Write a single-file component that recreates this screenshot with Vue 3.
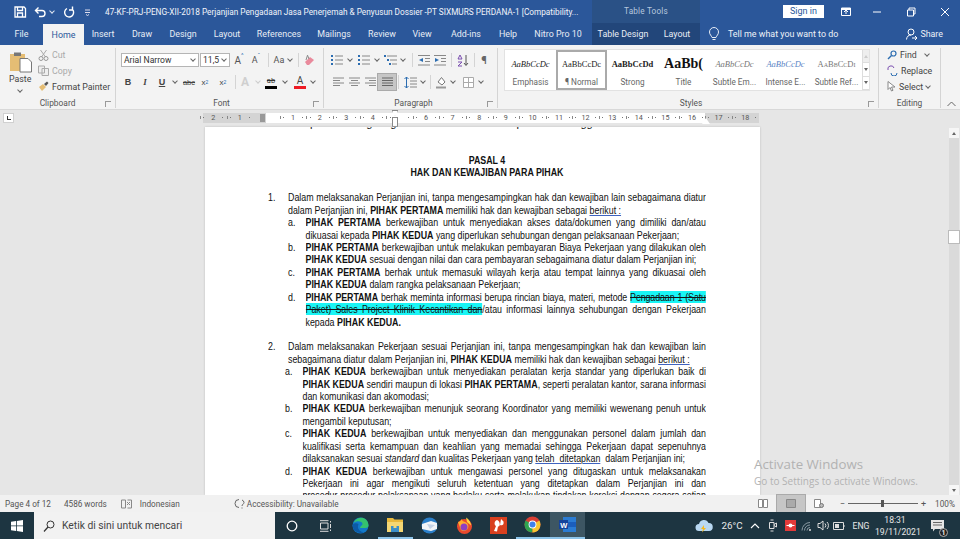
<template>
  <div class="word">
    <!-- title bar -->
    <header class="titlebar">
      <div class="qat">
        <svg class="q1" width="14" height="14" viewBox="0 0 14 14"><path d="M2 2h9l1.500 1.500V12H2zM4.500 2v3.500h5V2M4.500 12V8h5v4" fill="none" stroke="#fff" stroke-width="1.300"/></svg>
        <svg class="q2" width="14" height="14" viewBox="0 0 14 14"><path d="M3 5.500h6a3 3 0 0 1 0 6H6M5.500 2.500l-3 3 3 3" fill="none" stroke="#fff" stroke-width="1.400"/></svg>
        <span class="caret white q3"></span>
        <svg class="q4" width="14" height="14" viewBox="0 0 14 14"><path d="M5 3.500a4.500 4.500 0 1 0 5.500 1M10.500 1.500v3.500H7" fill="none" stroke="#fff" stroke-width="1.400"/></svg>
        <svg class="q5" width="8" height="8" viewBox="0 0 8 8"><path d="M1 2h5M1 4.500h5M2 6.500l1.500 1 1.500-1" fill="none" stroke="#dde" stroke-width="1"/></svg>
      </div>
      <div class="doc-title">47-KF-PRJ-PENG-XII-2018 Perjanjian Pengadaan Jasa Penerjemah &amp; Penyusun Dossier -PT SIXMURS PERDANA-1 [Compatibility...</div>
      <div class="context-title">Table Tools</div>
      <button class="signin">Sign in</button>
      <div class="win-btns">
        <svg width="11" height="10" viewBox="0 0 11 10"><path d="M.5 1h9v7.500h-9z" fill="none" stroke="#fff"/><path d="M5 7V3.500M3 5l2-2 2 2" fill="none" stroke="#fff"/><path d="M.5 1h9v2h-9z" fill="#fff"/></svg>
        <svg width="10" height="10" viewBox="0 0 10 10"><path d="M1 5h8" stroke="#fff"/></svg>
        <svg width="10" height="10" viewBox="0 0 10 10"><path d="M1.500 3h6v6h-6zM3 3V1h6v6H7.500" fill="none" stroke="#fff"/></svg>
        <svg width="10" height="10" viewBox="0 0 10 10"><path d="M1 1l8 8M9 1l-8 8" stroke="#fff"/></svg>
      </div>
    </header>

    <!-- tabs -->
    <nav class="tabs">
      <div
        v-for="t in tabs"
        :key="t.label + t.w"
        class="tab"
        :class="{ active: t.label === 'Home', ctx: t.ctx }"
        :style="{ width: t.w + 'px' }"
      >{{ t.label }}</div>
      <svg class="bulb" width="12" height="15" viewBox="0 0 12 15"><path d="M4 10.500C3.500 8.500 1.500 7.800 1.500 5a4.500 4.500 0 0 1 9 0c0 2.800-2 3.500-2.500 5.500zM4.500 12.500h3" fill="none" stroke="#e6ecf5" stroke-width="1"/></svg>
      <span class="tell">Tell me what you want to do</span>
      <svg class="share-ico" width="11" height="12" viewBox="0 0 11 12"><circle cx="5" cy="4" r="3" fill="none" stroke="#fff"/><path d="M.5 11.500c.3-3 2-4.500 4.500-4.500M6 10h5M9 8l2 2-2 2" fill="none" stroke="#fff"/></svg>
      <span class="share">Share</span>
    </nav>

    <!-- ribbon -->
    <section class="ribbon">
      <div class="group clipboard">
        <div class="g-body clip-body">
          <div class="paste">
            <svg width="24" height="22" viewBox="0 0 24 22">
              <path d="M1 3h15v17H1z" fill="#e5bd74"/>
              <path d="M5 1.500h7V5H5z" fill="#777"/>
              <path d="M11 7.500h8l3.500 3.500v10H11z" fill="#fff" stroke="#777"/>
            </svg>
            <span>Paste</span>
            <span class="caret"></span>
          </div>
          <div class="clip-list">
            <div class="clip-row dim">
              <svg width="11" height="12" viewBox="0 0 11 12"><path d="M2.500 1l5 7M8.500 1l-5 7" stroke="#aaa" fill="none"/><circle cx="3" cy="9.500" r="2" fill="none" stroke="#999"/><circle cx="8" cy="9.500" r="2" fill="none" stroke="#999"/></svg>
              Cut
            </div>
            <div class="clip-row dim">
              <svg width="11" height="11" viewBox="0 0 11 11"><path d="M.5 1h6v7h-6zM4 3.500h6.500v7H4z" fill="#eee" stroke="#aaa"/></svg>
              Copy
            </div>
            <div class="clip-row">
              <svg width="11" height="11" viewBox="0 0 11 11"><path d="M1 6l4-3 3 3-4 4z" fill="#e5bd74"/><path d="M6 3l3-2.500 1.500 1.500L8 5" fill="#555"/></svg>
              Format Painter
            </div>
          </div>
        </div>
        <div class="g-label">Clipboard<i class="launcher"></i></div>
      </div>

      <div class="group font">
        <div class="g-body">
          <div class="row">
            <div class="select fname">Arial Narrow<span class="caret"></span></div>
            <div class="select fsize">11,5<span class="caret"></span></div>
            <span class="tb w18 big">A<sup class="up">^</sup></span>
            <span class="tb w16 mid">A<sup class="up">ˇ</sup></span>
            <span class="tb w8"><i class="sep"></i></span>
            <span class="tb w14 mid">Aa</span>
            <span class="tb w8"><span class="caret"></span></span>
            <span class="tb w8"><i class="sep"></i></span>
            <span class="tb w16">
              <svg width="12" height="12" viewBox="0 0 12 12"><path d="M1 8l5-5 4 3-5 5H3z" fill="#e98a9c"/><path d="M3.500 1.200L2 6M3.500 1.200L5 5" stroke="#8a8a8a" fill="none"/></svg>
            </span>
          </div>
          <div class="row">
            <span class="tb w16 fmt bold">B</span>
            <span class="tb w18 fmt ital">I</span>
            <span class="tb w16 fmt under">U</span>
            <span class="tb w10"><span class="caret"></span></span>
            <span class="tb w18 fmt strike">abc</span>
            <span class="tb w14 fmt">x<sub>2</sub></span>
            <span class="tb w22 fmt">x<sup>2</sup></span>
            <span class="tb w2"><i class="sep"></i></span>
            <span class="tb w18 ghost">A</span>
            <span class="tb w8"><span class="caret pale"></span></span>
            <span class="tb w18 swatch">
              <span class="ab">ab</span><i class="bar black"></i>
            </span>
            <span class="tb w10"><span class="caret"></span></span>
            <span class="tb w20 swatch">
              <span class="aa">A</span><i class="bar red"></i>
            </span>
            <span class="tb w6"><span class="caret"></span></span>
          </div>
        </div>
        <div class="g-label">Font<i class="launcher"></i></div>
      </div>

      <div class="group para">
        <div class="g-body">
          <div class="row">
            <span class="tb w14"><svg width="12" height="12" viewBox="0 0 12 12"><path d="M4 2h8M4 6h8M4 10h8" stroke="#888"/><path d="M0 1h2v2H0zM0 5h2v2H0zM0 9h2v2H0z" fill="#2b6cb0"/></svg></span>
            <span class="tb w12"><span class="caret"></span></span>
            <span class="tb w16"><svg width="12" height="12" viewBox="0 0 12 12"><path d="M4 2h8M4 6h8M4 10h8" stroke="#888"/><path d="M0 1h2v2H0zM0 5h2v2H0zM0 9h2v2H0z" fill="#2b6cb0"/></svg></span>
            <span class="tb w10"><span class="caret"></span></span>
            <span class="tb w16"><svg width="13" height="12" viewBox="0 0 13 12"><path d="M3 2h10M6 6h7M8 10h5" stroke="#888"/><path d="M0 1h2v2H0zM3 5h2v2H3zM5 9h2v2H5z" fill="#2b6cb0"/></svg></span>
            <span class="tb w10"><span class="caret"></span></span>
            <span class="tb w8"><i class="sep"></i></span>
            <span class="tb w16"><svg width="12" height="11" viewBox="0 0 12 11"><path d="M0 .5h12M7 3.500h5M7 6.500h5M0 10h12" stroke="#888"/><path d="M5 3L1 5l4 2z" fill="#2b6cb0"/></svg></span>
            <span class="tb w16"><svg width="12" height="11" viewBox="0 0 12 11"><path d="M0 .5h12M7 3.500h5M7 6.500h5M0 10h12" stroke="#888"/><path d="M1 3l4 2-4 2z" fill="#2b6cb0"/></svg></span>
            <span class="tb w6"><i class="sep"></i></span>
            <span class="tb w18">
              <svg width="12" height="13" viewBox="0 0 12 13"><path d="M3 1L1 5h4zM1 8h4L1 12h4" fill="none" stroke="#7b4fb0"/><path d="M9 1v10M7 9l2 2.500L11 9" fill="none" stroke="#555"/></svg>
            </span>
            <span class="tb w4"><i class="sep"></i></span>
            <span class="tb w16 pil">¶</span>
          </div>
          <div class="row">
            <span class="tb w16"><svg width="11" height="10" viewBox="0 0 11 10"><path d="M0 1h11M0 3.500h7M0 6h11M0 8.500h7" stroke="#888"/></svg></span>
            <span class="tb w16"><svg width="11" height="10" viewBox="0 0 11 10"><path d="M0 1h11M2 3.500h7M0 6h11M2 8.500h7" stroke="#888"/></svg></span>
            <span class="tb w16"><svg width="11" height="10" viewBox="0 0 11 10"><path d="M0 1h11M4 3.500h7M0 6h11M4 8.500h7" stroke="#888"/></svg></span>
            <span class="tb w18 on"><svg width="11" height="10" viewBox="0 0 11 10"><path d="M0 1h11M0 3.500h11M0 6h11M0 8.500h11" stroke="#666"/></svg></span>
            <span class="tb w4"><i class="sep"></i></span>
            <span class="tb w20">
              <svg width="13" height="13" viewBox="0 0 13 13"><path d="M2.500 1v11M.5 3l2-2 2 2M.5 10l2 2 2-2" fill="none" stroke="#2b6cb0"/><path d="M6 2h7M6 5h7M6 8h7M6 11h7" stroke="#888"/></svg>
            </span>
            <span class="tb w6"><span class="caret"></span></span>
            <span class="tb w8"><i class="sep"></i></span>
            <span class="tb w14">
              <svg width="13" height="13" viewBox="0 0 13 13"><path d="M3 6l3.500-4.500L10 6l-3 3z" fill="#fff" stroke="#777"/><path d="M1 11.500h10" stroke="#999" stroke-width="2"/></svg>
            </span>
            <span class="tb w10"><span class="caret"></span></span>
            <span class="tb w20">
              <svg width="11" height="11" viewBox="0 0 11 11"><path d="M.5.500h10v10H.5zM5.500.500v10M.5 5.500h10" fill="#fff" stroke="#aaa"/></svg>
            </span>
            <span class="tb w6"><span class="caret"></span></span>
          </div>
        </div>
        <div class="g-label">Paragraph<i class="launcher"></i></div>
      </div>

      <div class="group styles">
        <div class="g-body gallery-wrap">
          <div class="gallery">
            <div v-for="s in styles" :key="s.label" class="style" :class="s.cls">
              <div class="sample">{{ s.sample }}</div>
              <div class="s-name">{{ s.label }}</div>
            </div>
            <div class="g-scroll">
              <span class="g-btn"><i class="tri-up"></i></span>
              <span class="g-btn"><i class="tri"></i></span>
              <span class="g-btn"><i class="tri"></i></span>
            </div>
          </div>
        </div>
        <div class="g-label">Styles<i class="launcher"></i></div>
      </div>

      <div class="group editing">
        <div class="g-body edit-list">
          <div class="edit-row">
            <svg width="10" height="10" viewBox="0 0 10 10"><circle cx="6.500" cy="3.500" r="2.500" fill="none" stroke="#2b6cb0" stroke-width="1.200"/><path d="M4.500 5.500L1 9" stroke="#2b6cb0" stroke-width="1.500"/></svg>
            Find <span class="caret edit-caret"></span>
          </div>
          <div class="edit-row">
            <svg width="11" height="11" viewBox="0 0 11 11"><path d="M1 5a3 3 0 0 1 6-2" fill="none" stroke="#7b4fb0"/><path d="M4 8a3 3 0 0 0 6 0" fill="none" stroke="#2b6cb0"/></svg>
            Replace
          </div>
          <div class="edit-row">
            <svg width="9" height="11" viewBox="0 0 9 11"><path d="M1 .5v8l2-2 1.500 3.500 1.500-.7L4.500 6H8z" fill="#fff" stroke="#888"/></svg>
            Select <span class="caret"></span>
          </div>
        </div>
        <div class="g-label">Editing</div>
      </div>
      <svg class="collapse" width="9" height="6" viewBox="0 0 9 6"><path d="M.5 5L4.500 1l4 4" fill="none" stroke="#666"/></svg>
    </section>

    <!-- ruler -->
    <div class="ruler-bar">
      <span class="tab-stop"></span>
      <div class="ruler">
        <div v-for="k in rulerMarks" :key="k" class="r-cell" :class="{ zero: k === 0 }">
          <i></i><span>{{ k === 0 || k === 5 ? '' : Math.abs(k) }}</span><i></i>
        </div>
        <span class="indent-top"></span>
        <span class="indent-bot"></span>
        <span class="right-ind"></span>
      </div>
    </div>

    <!-- document -->
    <main class="workspace">
      <div class="canvas">
        <article class="page">
          <div class="ln clipped">
            <span v-for="(m, i) in clipMarks" :key="i" :style="{ marginLeft: m.x + 'px' }">{{ m.c }}</span>
          </div>

          <!-- no Arial Narrow here, so Liberation Sans is squeezed to its width -->
          <div class="narrow">
            <h1 class="heading">PASAL 4</h1>
            <h1 class="heading after">HAK DAN KEWAJIBAN PARA PIHAK</h1>

            <div class="item">
              <div>1.</div>
              <div>
                <div class="ln j">Dalam melaksanakan Perjanjian ini, tanpa mengesampingkan hak dan kewajiban lain sebagaimana diatur</div>
                <div class="ln">dalam Perjanjian ini, <b>PIHAK PERTAMA</b> memiliki hak dan kewajiban sebagai <span class="proof">berikut :</span></div>
              </div>
            </div>
            <div class="sub first">
              <div>a.</div>
              <div>
                <div class="ln j"><b>PIHAK PERTAMA</b> berkewajiban untuk menyediakan akses data/dokumen yang dimiliki dan/atau</div>
                <div class="ln">dikuasai kepada <b>PIHAK KEDUA</b> yang diperlukan sehubungan dengan pelaksanaan Pekerjaan;</div>
              </div>
              <div>b.</div>
              <div>
                <div class="ln j"><b>PIHAK PERTAMA</b> berkewajiban untuk melakukan pembayaran Biaya Pekerjaan yang dilakukan oleh</div>
                <div class="ln"><b>PIHAK KEDUA</b> sesuai dengan nilai dan cara pembayaran sebagaimana diatur dalam Perjanjian ini;</div>
              </div>
              <div>c.</div>
              <div>
                <div class="ln j"><b>PIHAK PERTAMA</b> berhak untuk memasuki wilayah kerja atau tempat lainnya yang dikuasai oleh</div>
                <div class="ln"><b>PIHAK KEDUA</b> dalam rangka pelaksanaan Pekerjaan;</div>
              </div>
              <div>d.</div>
              <div>
                <div class="ln j tight"><b>PIHAK PERTAMA</b> berhak meminta informasi berupa rincian biaya, materi, metode <span class="struck">Pengadaan 1 (Satu</span></div>
                <div class="ln j"><span class="struck">Paket) Sales Project Klinik Kecantikan dan</span>/atau informasi lainnya sehubungan dengan Pekerjaan</div>
                <div class="ln">kepada <b>PIHAK KEDUA.</b></div>
              </div>
            </div>

            <div class="item second">
              <div>2.</div>
              <div>
                <div class="ln j">Dalam melaksanakan Pekerjaan sesuai Perjanjian ini, tanpa mengesampingkan hak dan kewajiban lain</div>
                <div class="ln">sebagaimana diatur dalam Perjanjian ini, <b>PIHAK KEDUA</b> memiliki hak dan kewajiban sebagai <span class="proof">berikut :</span></div>
              </div>
            </div>
            <div class="sub second-sub">
              <div>a.</div>
              <div>
                <div class="ln j"><b>PIHAK KEDUA</b> berkewajiban untuk menyediakan peralatan kerja standar yang diperlukan baik di lokasi</div>
                <div class="ln j"><b>PIHAK KEDUA</b> sendiri maupun di lokasi <b>PIHAK PERTAMA</b>, seperti peralatan kantor, sarana informasi</div>
                <div class="ln">dan komunikasi dan akomodasi;</div>
              </div>
              <div>b.</div>
              <div>
                <div class="ln j"><b>PIHAK KEDUA</b> berkewajiban menunjuk seorang Koordinator yang memiliki wewenang penuh untuk</div>
                <div class="ln">mengambil keputusan;</div>
              </div>
              <div>c.</div>
              <div>
                <div class="ln j"><b>PIHAK KEDUA</b> berkewajiban untuk menyediakan dan menggunakan personel dalam jumlah dan</div>
                <div class="ln j">kualifikasi serta kemampuan dan keahlian yang memadai sehingga Pekerjaan dapat sepenuhnya</div>
                <div class="ln">dilaksanakan sesuai <i>standard</i> dan kualitas Pekerjaan yang <span class="proof">telah&nbsp; ditetapkan</span>&nbsp; dalam Perjanjian ini;</div>
              </div>
              <div>d.</div>
              <div>
                <div class="ln j"><b>PIHAK KEDUA</b> berkewajiban untuk mengawasi personel yang ditugaskan untuk melaksanakan</div>
                <div class="ln j">Pekerjaan ini agar mengikuti seluruh ketentuan yang ditetapkan dalam Perjanjian ini dan</div>
                <div class="ln j">prosedur-prosedur pelaksanaan yang berlaku serta melakukan tindakan koreksi dengan segera setiap</div>
              </div>
            </div>
          </div>
        </article>
      </div>
      <aside class="vscroll">
        <span class="v-btn"><i class="tri-up"></i></span>
        <span class="v-thumb"></span>
        <span class="v-btn end"><i class="tri"></i></span>
      </aside>
      <div class="activate">
        <div class="a1">Activate Windows</div>
        <div class="a2">Go to Settings to activate Windows.</div>
      </div>
    </main>

    <!-- status bar -->
    <footer class="status">
      <span class="st-page">Page 4 of 12</span>
      <span class="st-words">4586 words</span>
      <svg class="st-book" width="11" height="10" viewBox="0 0 11 10"><path d="M.5 1h4v8h-4zM6.500 1h4M6.500 9h4M10.500 1v8" fill="none" stroke="#888"/><path d="M6 3l3 3M9 3L6 6" stroke="#888"/></svg>
      <span class="st-lang">Indonesian</span>
      <svg class="st-acc" width="12" height="11" viewBox="0 0 12 11"><path d="M5 1.500a4 4 0 1 0 0 8M8 2a3 3 0 0 1 2 2.500c0 1.500-2 1.800-2 3.500M8 9.500v1" fill="none" stroke="#666"/></svg>
      <span class="st-acc-text">Accessibility: Unavailable</span>
      <div class="views">
        <span class="view"><svg width="10" height="9" viewBox="0 0 10 9"><path d="M.5.500h4v8h-4zM5.500.500h4v8h-4z" fill="#fff" stroke="#888"/></svg></span>
        <span class="view on"><svg width="10" height="9" viewBox="0 0 10 9"><path d="M.5.500h9v8h-9z" fill="#aaa" stroke="#888"/></svg></span>
        <span class="view"><svg width="10" height="9" viewBox="0 0 10 9"><path d="M.5.500h6v8h-6z" fill="#fff" stroke="#888"/><circle cx="7.500" cy="6.500" r="2" fill="#bbb" stroke="#777"/></svg></span>
      </div>
      <div class="zoom">
        <span>−</span>
        <div class="track"><i></i></div>
        <span>+</span>
      </div>
      <span class="zoom-pct">100%</span>
    </footer>

    <!-- taskbar -->
    <div class="taskbar">
      <div class="start">
        <svg width="12" height="12" viewBox="0 0 12 12"><path d="M0 1.700L5 1v4.500H0zM5.800.9L12 0v5.500H5.800zM0 6.300h5v4.600l-5-.7zM5.800 6.300H12V12l-6.200-.9z" fill="#fff"/></svg>
      </div>
      <div class="search">
        <svg width="12" height="12" viewBox="0 0 12 12"><circle cx="7.500" cy="4.500" r="3.500" fill="none" stroke="#333"/><path d="M5 7l-4 4.500" stroke="#333" stroke-width="1.200"/></svg>
        <span>Ketik di sini untuk mencari</span>
      </div>
      <div class="apps">
        <div class="app"><svg width="12" height="12" viewBox="0 0 12 12"><circle cx="6" cy="6" r="4.800" fill="none" stroke="#fff" stroke-width="1.300"/></svg></div>
        <div class="app"><svg width="13" height="12" viewBox="0 0 13 12"><path d="M.5 3h7.500v6H.5zM0 .7h8.500M0 11.300h8.500M10.500 1v1.500M10.500 4v4M10.500 9.500V11" fill="none" stroke="#ddd"/></svg></div>
        <div class="app">
          <svg width="17" height="17" viewBox="0 0 17 17"><circle cx="8.500" cy="8.500" r="8" fill="#1279c9"/><path d="M1.500 6C3 2 7 .3 10.500.8c3.500.7 6 4 6 7.700 0 1.500-1 2.500-3 2.500H8c0-2 2.500-2.500 2.500-4C10.500 4.500 5 3 1.500 6z" fill="#35c26e"/><path d="M6 9c-.5 3 2 6 6 6.200A8 8 0 0 1 .5 8C1.500 6 5 5.500 6.500 7z" fill="#0c5aa6"/></svg>
        </div>
        <div class="app running">
          <svg width="16" height="15" viewBox="0 0 16 15"><path d="M0 1h6l1.500 1.500H16V15H0z" fill="#e8b93d"/><path d="M0 5h16v10H0z" fill="#f4d774"/><path d="M4 9h8v6H4z" fill="#3b8fc9"/><path d="M6.500 9h3v2h-3z" fill="#f4d774"/></svg>
        </div>
        <div class="app">
          <svg width="17" height="17" viewBox="0 0 17 17"><circle cx="8.500" cy="8.500" r="8" fill="#2b7fc9"/><path d="M1 7l9-3 6 2v6l-6 2-9-2z" fill="#f2f4f7"/><path d="M6 7l8 1-5 4z" fill="#c5d3e6"/></svg>
        </div>
        <div class="app">
          <svg width="17" height="17" viewBox="0 0 17 17"><circle cx="8.500" cy="9.500" r="7.500" fill="#e8492d"/><path d="M2 5c2 0 3-2 4-3 0 2 1 2 3 3 3 1 4 4 3 6-1 3-5 4-7 2" fill="#ffae2c"/><circle cx="8" cy="10" r="3.500" fill="#8e3fc2"/><path d="M10 .5c3 1.500 5 5 5 8L11 5z" fill="#ffd23f"/></svg>
        </div>
        <div class="app">
          <svg width="17" height="17" viewBox="0 0 17 17"><path d="M0 0h17v17H0z" fill="#d9401f"/><path d="M7 3C4 4 4 8 6 9l-2 5 3 .5 1-5c3 .5 2-6-1-6.500zM11 2l-1 6c3 1 4-1 3.500-3.500z" fill="#fff"/></svg>
        </div>
        <div class="app running">
          <svg width="17" height="17" viewBox="0 0 17 17"><circle cx="8.500" cy="8.500" r="8" fill="#d93f34"/><path d="M8.500 8.500L1.600 4.500A8 8 0 0 0 8.500 16.500z" fill="#2fa350"/><path d="M8.500 8.500l6.900-4A8 8 0 0 1 8.500 16.500z" fill="#f7c531"/><circle cx="8.500" cy="8.500" r="3.900" fill="#fff"/><circle cx="8.500" cy="8.500" r="3" fill="#3f81ec"/></svg>
        </div>
        <div class="app running active">
          <svg width="17" height="15" viewBox="0 0 17 15"><path d="M4 0h13v15H4z" fill="#2b7cd3"/><path d="M4 5h13v5H4z" fill="#1b5ebc"/><path d="M0 3h9v9H0z" fill="#14439b"/></svg>
          <b class="w-letter">W</b>
        </div>
      </div>
      <div class="tray">
        <span class="t28">
          <svg width="18" height="14" viewBox="0 0 18 14"><path d="M4 12a3.500 3.500 0 0 1 0-7 5 5 0 0 1 9.500-1A4 4 0 0 1 14 12z" fill="#b8d8f2"/><path d="M9 6l-3 4h2l-1 3.500L11 9H9z" fill="#f5b921"/></svg>
        </span>
        <span class="t28 temp">26°C</span>
        <span class="t18"><svg width="10" height="6" viewBox="0 0 10 6"><path d="M1 5l4-4 4 4" fill="none" stroke="#fff" stroke-width="1.100"/></svg></span>
        <span class="t18"><svg width="10" height="13" viewBox="0 0 10 13"><path d="M1.500 3.500h4.500v6H1.500zM6 5.500l2.500-1.500v4L6 6.500M2.500 1h3M2.500 12h3" fill="none" stroke="#ddd"/></svg></span>
        <span class="t16"><svg width="11" height="11" viewBox="0 0 11 11"><path d="M0 0h11v11H0z" fill="#e23a3a"/><circle cx="5.500" cy="5.500" r="2" fill="#fff"/><path d="M1.500 5.500h8" stroke="#fff"/></svg></span>
        <span class="t17"><svg width="11" height="10" viewBox="0 0 11 10"><path d="M1 9.500a8 8 0 0 1 8-8M3.500 9.500a5.500 5.500 0 0 1 5.500-5.500M6 9.500A3 3 0 0 1 9 6.500" fill="none" stroke="#8b9aa3"/><circle cx="9" cy="9" r="1" fill="#ddd"/></svg></span>
        <span class="t16"><svg width="13" height="11" viewBox="0 0 13 11"><path d="M1 3.500h2l3-2.500v9L3 7.500H1zM8 3.500a3 3 0 0 1 0 4M10 2a5 5 0 0 1 0 7" fill="none" stroke="#ddd"/></svg></span>
        <span class="t16"><svg width="12" height="8" viewBox="0 0 12 8"><path d="M.5.500h10v7H.5z" fill="none" stroke="#ddd"/><path d="M2 2h4v4H2z" fill="#ddd"/><path d="M11 3v2" stroke="#ddd"/></svg></span>
        <span class="t28 eng">ENG</span>
        <div class="clock"><div>18:31</div><div>19/11/2021</div></div>
        <span class="notif">
          <svg width="13" height="12" viewBox="0 0 13 12"><path d="M0 0h13v9H4L2 11.500V9H0z" fill="#e6e6e6"/><path d="M2 2.500h9M2 5h9" stroke="#666"/></svg>
          <b>1</b>
        </span>
      </div>
    </div>
  </div>
</template>

<script setup>
const tabs = [
  { label: 'File', w: 43 },
  { label: 'Home', w: 41 },
  { label: 'Insert', w: 38 },
  { label: 'Draw', w: 40 },
  { label: 'Design', w: 42 },
  { label: 'Layout', w: 46 },
  { label: 'References', w: 58 },
  { label: 'Mailings', w: 52 },
  { label: 'Review', w: 44 },
  { label: 'View', w: 36 },
  { label: 'Add-ins', w: 52 },
  { label: 'Help', w: 32 },
  { label: 'Nitro Pro 10', w: 68 },
  { label: 'Table Design', w: 62, ctx: true },
  { label: 'Layout', w: 46, ctx: true }
]

const styles = [
  { label: 'Emphasis', sample: 'AaBbCcDc', cls: 'em' },
  { label: '¶ Normal', sample: 'AaBbCcDc', cls: 'normal' },
  { label: 'Strong', sample: 'AaBbCcDd', cls: 'strong' },
  { label: 'Title', sample: 'AaBb(', cls: 'title' },
  { label: 'Subtle Em...', sample: 'AaBbCcDc', cls: 'subtle' },
  { label: 'Intense E...', sample: 'AaBbCcDc', cls: 'intense' },
  { label: 'Subtle Ref...', sample: 'AaBbCcDi', cls: 'ref' }
]

const rulerMarks = Array.from({ length: 21 }, (_, i) => i - 2)

// only the descenders of this line show under the ruler
const clipMarks = [
  { c: 'p', x: 105 },
  { c: 'g', x: 50 },
  { c: 'g', x: 18 },
  { c: 'p', x: 120 },
  { c: 'gg', x: 58 }
]
</script>

<style>
html, body {
  margin: 0;
  overflow: hidden;
}
</style>

<style scoped>
.word {
  width: 960px;
  height: 539px;
  display: flex;
  flex-direction: column;
  overflow: hidden;
  font-family: Roboto, "Open Sans", sans-serif;
  font-size: 8.8px;
  color: #444;
  background: #e6e6e6;
}

/* title bar */
.titlebar {
  height: 23px;
  flex: none;
  display: flex;
  align-items: center;
  background: #2b579a;
  color: #fff;
}
.qat {
  width: 105px;
  flex: none;
  display: flex;
  align-items: center;
}
.q1 { margin-left: 13px; }
.q2 { margin-left: 6px; }
.q3 { margin-left: 3px; }
.q4 { margin-left: 8px; }
.q5 { margin-left: 8px; }
.doc-title {
  width: 487px;
  flex: none;
  white-space: nowrap;
  color: #f2f5fa;
  font-size: 8.260px;
}
.context-title {
  width: 108px;
  flex: none;
  height: 23px;
  line-height: 23px;
  text-align: center;
  background: #2a5186;
  color: #b6c7de;
  font-size: 8.2px;
  letter-spacing: .2px;
}
.signin {
  margin-left: 83px;
  width: 41px;
  height: 13px;
  padding: 0;
  border: 0;
  background: #fff;
  color: #2b579a;
  font-family: inherit;
  font-size: 9px;
  line-height: 13px;
}
.win-btns {
  margin-left: 17px;
  display: flex;
  align-items: center;
  gap: 24px;
}
.win-btns svg:first-child {
  margin-right: -4px;
}

/* tabs */
.tabs {
  height: 22px;
  flex: none;
  display: flex;
  align-items: center;
  background: #2b579a;
  color: #e8edf5;
}
.tab {
  flex: none;
  height: 22px;
  line-height: 23px;
  text-align: center;
  font-size: 8.9px;
}
.tab.active {
  height: 21px;
  margin-top: 1px;
  line-height: 22px;
  background: #f3f3f3;
  color: #2b579a;
}
.tab.ctx {
  background: #22467a;
}
.bulb {
  margin-left: 8px;
  flex: none;
}
.tell {
  margin-left: 8px;
  font-size: 8.9px;
  color: #eef2f8;
  white-space: nowrap;
}
.share-ico {
  margin-left: auto;
}
.share {
  margin-left: 3px;
  margin-right: 17px;
  color: #eef2f8;
  font-size: 8.9px;
}

/* ribbon */
.ribbon {
  height: 65px;
  flex: none;
  display: flex;
  background: #f3f3f3;
  border-bottom: 1px solid #d8d8d8;
  box-sizing: border-box;
  position: relative;
}
.group {
  flex: none;
  display: flex;
  flex-direction: column;
  border-right: 1px solid #d4d4d4;
  box-sizing: border-box;
  margin: 3px 0 1px;
}
.clipboard { width: 116px; }
.font { width: 208px; padding-left: 4px; }
.para { width: 174px; padding-left: 6px; }
.styles { width: 381px; padding-left: 6px; }
.editing { width: 62px; border-right: 1px solid #d4d4d4; }
.g-body {
  height: 50px;
  flex: none;
  padding-top: 1px;
  box-sizing: border-box;
}
.g-label {
  position: relative;
  flex: 1;
  text-align: center;
  font-size: 8.4px;
  line-height: 11px;
  color: #555;
}
.launcher {
  position: absolute;
  right: 4px;
  top: 3px;
  width: 5px;
  height: 5px;
  border: 1px solid #999;
  border-width: 1px 0 0 1px;
}
.clip-body {
  display: flex;
  padding-top: 0;
}
.paste {
  width: 42px;
  flex: none;
  padding-left: 9px;
  padding-top: 3px;
  box-sizing: border-box;
  display: flex;
  flex-direction: column;
  align-items: flex-start;
  font-size: 8.8px;
  color: #444;
  line-height: 12px;
}
.paste .caret {
  margin: 3px 0 0 9px;
}
.clip-list {
  margin-left: -4px;
  display: flex;
  flex-direction: column;
  gap: 3px;
}
.clip-row {
  height: 13px;
  display: flex;
  align-items: center;
  gap: 3px;
  font-size: 8.8px;
  white-space: nowrap;
  color: #444;
}
.clip-row.dim {
  color: #aaa;
}
.row {
  height: 22px;
  display: flex;
  align-items: center;
}
.select {
  box-sizing: border-box;
  height: 14px;
  background: #fff;
  border: 1px solid #b5b5b5;
  display: flex;
  align-items: center;
  justify-content: space-between;
  padding: 0 3px 0 2px;
  font-size: 8.6px;
  color: #333;
  flex: none;
}
.fname { width: 78px; margin-left: 1px; margin-right: 1px; }
.fsize { width: 30px; }
.tb {
  flex: none;
  height: 16px;
  display: flex;
  align-items: center;
  justify-content: center;
  color: #555;
}
.w2 { width: 2px; }
.w4 { width: 4px; }
.w6 { width: 6px; }
.w8 { width: 8px; }
.w10 { width: 10px; }
.w12 { width: 12px; }
.w14 { width: 14px; }
.w16 { width: 16px; }
.w18 { width: 18px; }
.w20 { width: 20px; }
.w22 { width: 22px; }
.big { font-size: 10px; }
.mid { font-size: 9px; }
.up {
  font-size: 6px;
  line-height: 1;
  color: #2b6cb0;
  align-self: flex-start;
}
.sep {
  width: 1px;
  height: 14px;
  background: #d4d4d4;
  display: block;
}
.fmt {
  font-size: 8px;
  color: #444;
  font-family: "Liberation Sans", sans-serif;
}
.fmt sub, .fmt sup {
  font-size: 5px;
  color: #2b6cb0;
  line-height: 0;
}
.bold { font-weight: 700; font-size: 9px; }
.ital { font-style: italic; font-family: "Liberation Serif", serif; font-weight: 700; font-size: 9px; }
.under { text-decoration: underline; font-weight: 700; font-size: 9px; }
.strike { text-decoration: line-through; font-size: 7.5px; }
.ghost {
  font-size: 12px;
  color: #cfcfcf;
  font-weight: 700;
}
.swatch {
  flex-direction: column;
  line-height: 9px;
}
.ab {
  font-size: 7.5px;
  color: #333;
  text-decoration: line-through;
}
.aa {
  font-size: 10px;
  color: #444;
}
.bar {
  width: 12px;
  height: 3px;
  display: block;
  margin-top: 1px;
}
.bar.black { background: #000; }
.bar.red { background: #ee1c25; }
.pil {
  font-size: 11px;
  color: #666;
  font-weight: 700;
}
.on {
  background: #c6c6c6;
  outline: 1px solid #aaa;
}
.caret {
  display: inline-block;
  width: 3px;
  height: 3px;
  border: solid #666;
  border-width: 0 1px 1px 0;
  transform: rotate(45deg);
  flex: none;
  margin-top: -2px;
}
.caret.white { border-color: #dfe6f1; }
.caret.pale { border-color: #ccc; }

/* styles gallery */
.gallery {
  width: 366px;
  height: 42px;
  display: flex;
  background: #fff;
  border: 1px solid #e2e2e2;
  box-sizing: border-box;
}
.style {
  width: 51px;
  flex: none;
  height: 40px;
  box-sizing: border-box;
  text-align: center;
  overflow: hidden;
  padding-top: 6px;
}
.sample {
  height: 16px;
  line-height: 16px;
  font-family: "Liberation Serif", serif;
  font-size: 8.5px;
  color: #222;
  white-space: nowrap;
  overflow: hidden;
}
.s-name {
  margin-top: 5px;
  font-size: 8.2px;
  line-height: 10px;
  color: #666;
  white-space: nowrap;
}
.em .sample { font-style: italic; }
.normal {
  border: 2px solid #aaa;
  padding-top: 4px;
}
.strong .sample { font-weight: 700; }
.title .sample { font-weight: 700; font-size: 14px; color: #111; }
.subtle .sample { font-style: italic; color: #777; }
.intense .sample { font-style: italic; color: #5b85c5; }
.ref .sample { font-variant: small-caps; color: #777; }
.g-scroll {
  margin-left: auto;
  width: 9px;
  display: flex;
  flex-direction: column;
  border-left: 1px solid #ddd;
}
.g-btn {
  flex: 1;
  display: flex;
  align-items: center;
  justify-content: center;
  border-bottom: 1px solid #ddd;
  background: #fff;
}
.g-btn:first-child {
  background: #eee;
}
.tri, .tri-up {
  width: 0;
  height: 0;
  border-left: 2.500px solid transparent;
  border-right: 2.500px solid transparent;
  border-top: 3px solid #666;
  display: block;
}
.tri-up {
  border-top: 0;
  border-bottom: 3px solid #666;
}
.g-btn .tri-up { border-bottom-color: #ccc; }
.edit-list {
  padding: 0 0 0 8px;
  display: flex;
  flex-direction: column;
  gap: 3px;
}
.edit-row {
  height: 13px;
  display: flex;
  align-items: center;
  gap: 3px;
  font-size: 8.8px;
  color: #444;
  white-space: nowrap;
}
.edit-caret { margin-left: 5px; }
.collapse {
  margin: 56px 0 0 6px;
}

/* ruler */
.ruler-bar {
  height: 15px;
  flex: none;
  display: flex;
  align-items: center;
  background: #e6e6e6;
}
.tab-stop {
  width: 11px;
  height: 10px;
  margin-left: 3px;
  flex: none;
  background: #fff;
  border: 1px solid #d0d0d0;
  box-sizing: border-box;
  position: relative;
}
.tab-stop::after {
  content: "";
  position: absolute;
  left: 3px;
  top: 2px;
  width: 3px;
  height: 3px;
  border: solid #333;
  border-width: 0 0 1px 1px;
}
.ruler {
  margin-left: 186px;
  width: 559px;
  height: 10px;
  display: flex;
  position: relative;
  background: linear-gradient(to right, transparent 3px, #d4d4d4 3px, #d4d4d4 66px, #fff 66px, #fff 505px, #d4d4d4 505px);
}
.r-cell {
  width: 26.600px;
  flex: none;
  display: flex;
  align-items: center;
  justify-content: space-around;
  font-size: 7.200px;
  line-height: 10px;
  color: #555;
  box-sizing: border-box;
  background: linear-gradient(#888, #888) left center / 1px 3px no-repeat;
}
.r-cell i {
  width: 1px;
  height: 1px;
  background: #777;
  display: block;
}
.r-cell.zero {
  background: linear-gradient(#999, #999) 7px center / 5px 8px no-repeat;
}
.r-cell.zero i {
  visibility: hidden;
}
.indent-top {
  position: absolute;
  left: 192px;
  top: -3px;
  width: 6px;
  height: 6px;
  background: #fff;
  border: 1px solid #888;
  box-sizing: border-box;
  clip-path: polygon(0 0, 100% 0, 100% 20%, 50% 100%, 0 20%);
}
.indent-bot {
  position: absolute;
  left: 192px;
  top: 4px;
  width: 6px;
  height: 10px;
  border: 1px solid #888;
  box-sizing: border-box;
  background: #fff;
}
.right-ind {
  position: absolute;
  left: 502px;
  top: 5px;
  width: 0;
  height: 0;
  border-left: 4px solid transparent;
  border-right: 4px solid transparent;
  border-bottom: 6px solid #fff;
}

/* document */
.workspace {
  flex: 1;
  min-height: 0;
  display: flex;
  position: relative;
  overflow: hidden;
}
.canvas {
  flex: 1;
  padding-left: 205px;
  padding-top: 2px;
  overflow: hidden;
}
.page {
  width: 555px;
  height: 368px;
  padding-left: 63px;
  box-sizing: border-box;
  background: #fff;
  box-shadow: 0 0 2px #bbb;
  font-family: "Liberation Sans", sans-serif;
  font-size: 11px;
  line-height: 12.430px;
  color: #111;
  overflow: hidden;
}
.narrow {
  width: 544px;
  transform: scaleX(.805);
  transform-origin: left top;
}
.ln {
  white-space: nowrap;
  height: 12.430px;
}
.ln.j {
  white-space: normal;
  text-align: justify;
  text-align-last: justify;
  overflow: hidden;
}
.ln.tight {
  letter-spacing: -.12px;
}
.clipped {
  margin-top: -10.500px;
  margin-left: -63px;
  margin-bottom: 25px;
  overflow: hidden;
}
.heading {
  margin: 0;
  font-size: 11px;
  font-weight: 700;
  line-height: 12.430px;
  text-align: center;
}
.heading.after {
  margin-bottom: 12.500px;
}
.item {
  display: grid;
  grid-template-columns: 24.840px 1fr;
}
.item.second {
  margin-top: 12.430px;
}
.sub {
  display: grid;
  grid-template-columns: 21.740px 1fr;
  margin-left: 24.840px;
}
.second-sub {
  margin-left: 21.100px;
}
.proof {
  text-decoration: underline;
  text-decoration-color: #3f63c0;
}
.struck {
  background: #19f5f5;
  text-decoration: line-through;
}
.vscroll {
  position: absolute;
  right: 1px;
  top: 3px;
  bottom: 0;
  width: 10px;
  background: #dadada;
  display: flex;
  flex-direction: column;
}
.v-btn {
  height: 10px;
  background: #f6f6f6;
  display: flex;
  align-items: center;
  justify-content: center;
}
.v-btn.end {
  margin-top: auto;
}
.v-thumb {
  height: 12px;
  margin-top: 93px;
  background: #fff;
  outline: 1px solid #bbb;
}
.activate {
  position: absolute;
  left: 754px;
  top: 331px;
  color: #b2b2b2;
  font-family: "Open Sans", sans-serif;
  pointer-events: none;
}
.a1 {
  font-size: 13.300px;
  line-height: 17px;
}
.a2 {
  font-size: 10px;
  line-height: 13px;
  margin-top: 2px;
  white-space: nowrap;
}

/* status bar */
.status {
  height: 17px;
  flex: none;
  display: flex;
  align-items: center;
  background: #f1f1f1;
  font-size: 8.200px;
  color: #555;
  white-space: nowrap;
}
.st-page { margin-left: 5px; }
.st-words { margin-left: 13px; }
.st-book { margin-left: 14px; }
.st-lang { margin-left: 8px; }
.st-acc { margin-left: 54px; }
.st-acc-text { margin-left: 1px; }
.views {
  margin-left: auto;
  display: flex;
  height: 17px;
}
.view {
  width: 28px;
  display: flex;
  align-items: center;
  justify-content: center;
}
.view.on {
  background: #c6c6c6;
}
.zoom {
  margin-left: 3px;
  width: 94px;
  display: flex;
  align-items: center;
  justify-content: center;
  gap: 3px;
  font-size: 9px;
}
.track {
  width: 70px;
  height: 1px;
  background: #666;
  position: relative;
}
.track i {
  position: absolute;
  left: 33px;
  top: -3px;
  width: 3px;
  height: 7px;
  background: #555;
}
.zoom-pct {
  width: 30px;
  text-align: center;
}

/* taskbar */
.taskbar {
  height: 27px;
  flex: none;
  display: flex;
  background: #1d3541;
}
.start {
  width: 34px;
  flex: none;
  display: flex;
  align-items: center;
  justify-content: center;
}
.search {
  width: 241px;
  flex: none;
  display: flex;
  align-items: center;
  gap: 7px;
  padding-left: 9px;
  box-sizing: border-box;
  background: #f2f2f2;
  font-size: 10.300px;
  color: #444;
}
.apps {
  display: flex;
}
.app {
  width: 34.400px;
  flex: none;
  display: flex;
  align-items: center;
  justify-content: center;
  position: relative;
  box-sizing: border-box;
}
.app.running {
  border-bottom: 2px solid #8cc4ea;
}
.app.active {
  background: #3d5663;
}
.w-letter {
  position: absolute;
  left: 10px;
  top: 9px;
  font-size: 7.500px;
  color: #fff;
  font-family: "Liberation Sans", sans-serif;
}
.tray {
  margin-left: auto;
  display: flex;
  align-items: center;
  color: #e8e8e8;
  font-size: 9px;
}
.tray > span {
  display: flex;
  align-items: center;
  justify-content: center;
  flex: none;
}
.t28 { width: 28px; }
.t18 { width: 18px; }
.t17 { width: 17px; }
.t16 { width: 16px; }
.temp { font-size: 9.800px; }
.eng { font-size: 8.600px; }
.clock {
  width: 40px;
  text-align: center;
  font-size: 8.600px;
  line-height: 12px;
  white-space: nowrap;
}
.notif {
  width: 45px;
  position: relative;
}
.notif b {
  position: absolute;
  left: 24px;
  top: 8px;
  width: 9px;
  height: 9px;
  line-height: 8px;
  font-size: 7px;
  border: 1px solid #aaa;
  border-radius: 50%;
  background: #222;
  text-align: center;
  box-sizing: border-box;
}
</style>
